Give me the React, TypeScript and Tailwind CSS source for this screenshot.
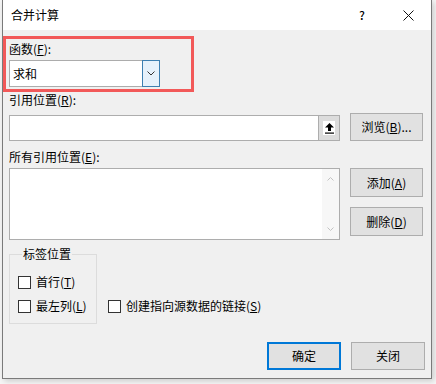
import { ReactNode } from "react";

const FONT = "font-['Noto_Sans_CJK_SC','Noto_Sans',sans-serif]";

function Btn({ children, primary = false, className = "" }: { children: ReactNode; primary?: boolean; className?: string }) {
  return (
    <div
      className={`flex items-center justify-center bg-[#e1e1e1] text-[12px] leading-[16px] text-black ${
        primary ? "border-2 border-[#0078d7]" : "border border-[#adadad]"
      } ${className}`}
    >
      {children}
    </div>
  );
}

function Check({ children }: { children: ReactNode }) {
  return (
    <div className="flex h-[16px] items-center gap-[5px] text-[12px] leading-[16px]">
      <span className="h-[13px] w-[13px] border border-[#333] bg-white" />
      <span>{children}</span>
    </div>
  );
}

export default function App() {
  return (
    <div className={`relative h-[384px] w-[436px] overflow-hidden bg-[#f6f6f6] text-black ${FONT}`}>
      <div className="ml-[2px] flex h-[379px] w-[430px] flex-col border border-t-0 border-[#7a7a7a] bg-[#f0f0f0] shadow-[2px_2px_6px_rgba(0,0,0,0.18)]">
        {/* title bar */}
        <div className="flex h-[30px] items-center bg-white">
          <span className="pl-[8px] text-[12px] leading-[16px]">合并计算</span>
          <div className="ml-auto flex h-full">
            <div className="flex w-[46px] items-center justify-center text-[12px] font-medium">?</div>
            <div className="flex w-[46px] items-center justify-center">
              <svg width="11" height="11" viewBox="0 0 11 11">
                <path d="M0.5 0.5 L10.5 10.5 M10.5 0.5 L0.5 10.5" stroke="#111" strokeWidth="1" fill="none" />
              </svg>
            </div>
          </div>
        </div>

        {/* body */}
        <div className="flex flex-1 flex-col pl-[6px] pt-[11px] text-[12px] leading-[16px]">
          <div className="h-[16px]">
            函数(<u>F</u>):
          </div>
          <div className="mt-[3px] flex h-[27px] w-[151px] border border-[#acacac] bg-white">
            <div className="flex flex-1 items-center pl-[3px]">求和</div>
            <div className="-my-px -mr-px flex w-[18px] items-center justify-center border border-[#3c7fb1] bg-[#e5f1fb]">
              <svg width="8" height="5" viewBox="0 0 8 5">
                <path d="M0.5 0.5 L4 4 L7.5 0.5" stroke="#333" strokeWidth="1" fill="none" />
              </svg>
            </div>
          </div>

          <div className="mt-[5px] h-[16px]">
            引用位置(<u>R</u>):
          </div>
          <div className="mt-[5px] flex items-start">
            <div className="mt-[2px] flex h-[26px] w-[331px] border border-[#adadad] bg-white">
              <div className="flex-1" />
              <div className="flex w-[21px] items-center justify-center border-l border-[#adadad] bg-[#dcdcdc]">
                <div className="flex h-[14px] w-[12px] items-center justify-center bg-white">
                  <svg width="9" height="11" viewBox="0 0 9 11">
                    <path d="M4.5 0 L0 4.5 L3 4.5 L3 8 L6 8 L6 4.5 L9 4.5 Z" fill="#000" />
                    <rect x="0" y="9.5" width="9" height="1.2" fill="#000" />
                  </svg>
                </div>
              </div>
            </div>
            <Btn className="ml-[10px] h-[28px] w-[73px]">
              浏览(<u>B</u>)...
            </Btn>
          </div>

          <div className="mt-[8px] h-[16px]">
            所有引用位置(<u>E</u>):
          </div>
          <div className="mt-[3px] flex items-start">
            <div className="flex h-[72px] w-[331px] border border-[#adadad] bg-white">
              <div className="flex-1" />
              <div className="flex w-[17px] flex-col items-center justify-between bg-[#f7f7f7] py-[8px]">
                <svg width="7" height="4" viewBox="0 0 7 4">
                  <path d="M0.5 3.5 L3.5 0.5 L6.5 3.5" stroke="#c2c2c2" strokeWidth="1" fill="none" />
                </svg>
                <svg width="7" height="4" viewBox="0 0 7 4">
                  <path d="M0.5 0.5 L3.5 3.5 L6.5 0.5" stroke="#c2c2c2" strokeWidth="1" fill="none" />
                </svg>
              </div>
            </div>
            <div className="ml-[10px] flex flex-col gap-[10px]">
              <Btn className="h-[29px] w-[73px]">
                添加(<u>A</u>)
              </Btn>
              <Btn className="h-[29px] w-[73px]">
                删除(<u>D</u>)
              </Btn>
            </div>
          </div>

          <div className="mt-[6px] flex">
            <fieldset className="w-[88px] border border-[#dcdcdc] pb-[9px] pl-[8px]">
              <legend className="ml-[4px] px-[1px] text-[12px] leading-[16px]">标签位置</legend>
              <div className="mt-[12px] flex flex-col gap-[8px]">
                <Check>
                  首行(<u>T</u>)
                </Check>
                <Check>
                  最左列(<u>L</u>)
                </Check>
              </div>
            </fieldset>
            <div className="mb-[10px] ml-[11px] self-end">
              <Check>
                创建指向源数据的链接(<u>S</u>)
              </Check>
            </div>
          </div>

          <div className="mt-[18px] flex justify-end gap-[10px] pr-[6px]">
            <Btn primary className="h-[28px] w-[74px]">
              确定
            </Btn>
            <Btn className="h-[28px] w-[74px]">关闭</Btn>
          </div>
        </div>
      </div>

      {/* annotation frame */}
      <div className="absolute left-[3px] top-[36px] h-[56px] w-[191px] border-[3px] border-[#f25959]" />
    </div>
  );
}
